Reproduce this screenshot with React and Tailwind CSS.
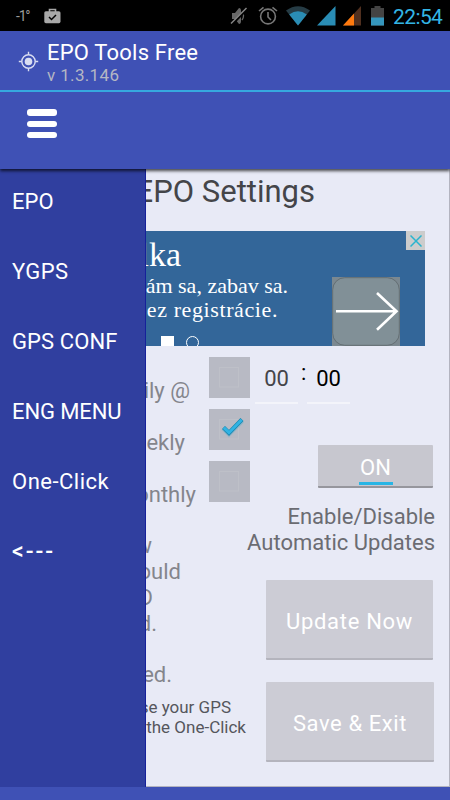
import clsx from "clsx";

const menuItems = [
  { label: "EPO", style: "text-[22px] tracking-[0.1px]" },
  { label: "YGPS", style: "text-[22px] tracking-[0.4px]" },
  { label: "GPS CONF", style: "text-[22px] tracking-[0.1px]" },
  { label: "ENG MENU", style: "text-[22px] tracking-[-0.1px]" },
  { label: "One-Click", style: "text-[22px] tracking-[0.5px]" },
  { label: "<---", style: "text-[23px] font-medium tracking-[2px]" },
];

const schedules = [
  { label: "ily @", width: "w-[44px]", checked: false },
  { label: "ekly", width: "w-[39px]", checked: true },
  { label: "onthly", width: "w-[50px]", checked: false },
];

const StatusBar = () => (
  <div className="flex h-[31px] items-center bg-black pr-[7px] pl-[16px]">
    <span className="w-[28px] text-[14px] leading-none tracking-[-1.2px] text-[#9a9a9a]">-1°</span>
    {/* Store bag */}
    <svg className="h-[16px] w-[17px]" viewBox="0 0 17 16">
      <path d="M5.5 4V1.5h6V4" fill="none" stroke="#a8a8a8" strokeWidth="1.6" />
      <rect x="0.3" y="3.2" width="16.2" height="12" rx="1.6" fill="#a8a8a8" />
      <path d="M5 9l2.5 2.5 4.5-4.5" fill="none" stroke="#000" strokeWidth="1.5" />
    </svg>
    <div className="ml-auto flex items-center">
      {/* Muted speaker */}
      <svg className="h-[20px] w-[18px]" viewBox="0 0 18 20">
        <path d="M2 7h3l4-5q2 0 2 3v10q0 3-2 3l-4-5H2z" fill="#666" />
        <path d="M12 6q3 4 0 8" fill="none" stroke="#666" strokeWidth="1.3" />
        <path d="M1.500 18.500L17 3" stroke="#000" strokeWidth="3" />
        <path d="M1 17.500L16.500 2" stroke="#888" strokeWidth="1.4" />
      </svg>
      {/* Alarm */}
      <svg className="ml-[10px] h-[20px] w-[20px]" viewBox="0 0 20 20" fill="none" stroke="#777" strokeWidth="1.6">
        <circle cx="10" cy="10.5" r="7.4" />
        <path d="M10 6v5l3 3" />
        <path d="M1 5l4.500-3.700M19 5l-4.500-3.700" />
      </svg>
      {/* Wifi */}
      <svg className="ml-[8px] h-[20px] w-[24px]" viewBox="0 0 24 20">
        <path d="M0 4.500Q12-4 24 4.500L12 19.500z" fill="#263c45" />
        <path d="M3.200 8.500Q12 2 20.800 8.500L12 19.500z" fill="#2a8db5" />
      </svg>
      {/* Signal, both SIMs */}
      <svg className="ml-[7px] h-[20px] w-[19px]" viewBox="0 0 19 20">
        <path d="M0 19.500L18.500 0V19.500z" fill="#2a8db5" />
      </svg>
      <svg className="ml-[7px] h-[20px] w-[18px]" viewBox="0 0 18 20">
        <path d="M0 19.500L18 0V19.500z" fill="#51301f" />
        <path d="M0 19.500L11 7.500V19.500z" fill="#ff7a0e" />
      </svg>
      {/* Battery */}
      <svg className="ml-[10px] h-[20px] w-[13px]" viewBox="0 0 13 20">
        <path d="M0 2h3.500V0h6v2H13v17.500H0z" fill="#444" />
        <path d="M0 11.500h13v8H0z" fill="#3596bd" />
      </svg>
      <span className="ml-[9px] w-[50px] pt-[3px] text-[21px] leading-[28px] tracking-[-0.6px] whitespace-nowrap text-[#33b5e5]">
        22:54
      </span>
    </div>
  </div>
);

const Header = () => (
  <header className="z-10 bg-[#3f51b5] shadow-[0_2px_3px_rgba(0,0,0,0.7)]">
    <div className="flex h-[61px] items-start border-b-2 border-[#36a9df] pl-[18px]">
      <svg className="mt-[20px] h-[21px] w-[21px]" viewBox="0 0 21 21" fill="none" stroke="#d9ddf2" strokeWidth="1.4">
        <circle cx="10.500" cy="10.500" r="6.700" />
        <path d="M10.500 0.800v3M10.500 17.200v3M0.800 10.500h3M17.200 10.500h3" />
        <circle cx="10.500" cy="10.500" r="3.800" fill="#d9ddf2" stroke="none" />
      </svg>
      <div className="pt-[9px] pl-[8px]">
        <h1 className="text-[22px] leading-[26px] tracking-[0.2px] text-white">EPO Tools Free</h1>
        <p className="-mt-[1px] text-[17px] leading-[20px] tracking-[0.35px] text-[#b5b7c4]">v 1.3.146</p>
      </div>
    </div>
    <div className="flex h-[77px] flex-col gap-[5px] pt-[17px] pl-[27px]">
      <span className="h-[7px] w-[30px] rounded-[3px] bg-white" />
      <span className="h-[6px] w-[30px] rounded-[3px] bg-white" />
      <span className="h-[6px] w-[30px] rounded-[3px] bg-white" />
    </div>
  </header>
);

const SideMenu = () => (
  <nav className="flex w-[146px] shrink-0 flex-col gap-[30px] border-r border-[#16219a] bg-[#303f9f] pt-[13px] pl-[12px]">
    {menuItems.map((item) => (
      <a key={item.label} className={clsx("h-[40px] leading-[40px] whitespace-nowrap text-white", item.style)}>
        {item.label}
      </a>
    ))}
  </nav>
);

const Banner = () => (
  <div className="flex h-[115px] w-[279px] items-start overflow-hidden bg-[#336699] font-['Liberation_Serif',serif] text-white">
    <div className="w-[186px]">
      <div className="flex h-[42px] w-[35px] justify-end">
        <span className="text-[34px] leading-[48px] whitespace-nowrap">lka</span>
      </div>
      <div className="flex h-[24px] w-[142px] justify-end">
        <span className="text-[22px] leading-[25px] whitespace-nowrap">ám sa, zabav sa.</span>
      </div>
      <div className="flex h-[24px] w-[132px] justify-end">
        <span className="text-[22px] leading-[25px] tracking-[0.6px] whitespace-nowrap">ez registrácie.</span>
      </div>
      <div className="flex gap-[12px] pt-[15px] pl-[15px]">
        <span className="h-[13px] w-[13px] bg-white" />
        <span className="h-[13px] w-[13px] rounded-full border border-white" />
      </div>
    </div>
    <div className="mt-[46px] h-[69px] w-[68px] bg-[#7b8890]">
      <svg className="h-[69px] w-[68px]" viewBox="0 0 68 69" fill="none">
        <rect x="0.700" y="0.700" width="66.600" height="67.600" rx="12" fill="#819097" stroke="#646e73" />
        <path d="M4 34.300h60M45 16l19.500 18.300L45 52.700" stroke="#fff" strokeWidth="2.600" />
      </svg>
    </div>
    <div className="ml-auto flex h-[19px] w-[19px] items-center justify-center bg-[#cccccc]">
      <svg className="h-[12px] w-[12px]" viewBox="0 0 12 12" stroke="#29b4cf" strokeWidth="1.500">
        <path d="M0.500 0.500l11 11M11.500 0.500l-11 11" />
      </svg>
    </div>
  </div>
);

const CheckBox = ({ checked }) => (
  <div className="h-[41px] w-[41px] bg-[#b8bac4]">
    <svg className="h-[41px] w-[41px]" viewBox="0 0 41 41" fill="none">
      <rect x="10.500" y="10.500" width="19" height="19.500" stroke="#bec0c8" />
      {checked && (
        <>
          <path d="M14.500 19l5.500 5.500L33 11.500" stroke="#72b3cd" strokeWidth="5.500" opacity="0.5" />
          <path d="M14.500 18.500l5.500 5.500L33 10.500" stroke="#1a84ad" strokeWidth="4.200" />
          <path d="M14.800 18.700l5.200 5L32.700 10.800" stroke="#31b3e3" strokeWidth="3" />
        </>
      )}
    </svg>
  </div>
);

// Text whose start runs under the side menu
const Clipped = ({ width, className, children }) => (
  <div className={clsx("flex justify-end whitespace-nowrap", width, className)}>
    <span>{children}</span>
  </div>
);

const Schedule = () => (
  <div className="w-[104px] shrink-0 text-[22px] text-[#84858c]">
    <div className="flex flex-col gap-[11px] pt-[11px]">
      {schedules.map((s) => (
        <div key={s.label} className="flex h-[41px] justify-between">
          <Clipped width={s.width} className="pt-[21px] leading-[26px]">
            {s.label}
          </Clipped>
          <CheckBox checked={s.checked} />
        </div>
      ))}
    </div>
    <div className="pt-[31px] leading-[26px]">
      <Clipped width="w-[6px]">w</Clipped>
      <Clipped width="w-[35px]">ould</Clipped>
      <Clipped width="w-[7px]">D</Clipped>
      <Clipped width="w-[11px]">d.</Clipped>
      <Clipped width="w-[26px]" className="pt-[25px]">
        ed.
      </Clipped>
    </div>
    <div className="pt-[9px] text-[17px] leading-[20px] text-[#55565c]">
      <Clipped width="w-[85px]">se your GPS</Clipped>
      <Clipped width="w-[100px]">the One-Click</Clipped>
    </div>
  </div>
);

const Controls = () => (
  <div className="flex w-[199px] flex-col items-end pr-[14px]">
    <div className="flex h-[99px] w-[185px] items-start gap-[3px] pt-[20px] pl-[5px] text-[22px] leading-[26px]">
      <div className="flex h-[38px] w-[43px] justify-center border-b-2 border-[#f3f4fa] text-[#444449]">00</div>
      <span className="-mt-[6px] w-[3px] text-black">:</span>
      <div className="flex h-[38px] w-[43px] justify-center border-b-2 border-[#f3f4fa] text-black">00</div>
    </div>
    <button className="mr-[2px] flex h-[43px] w-[115px] flex-col items-center rounded-[1px] border-b-2 border-[#96969d] bg-[#c7c7cf] pt-[10px] text-[22px] leading-[26px] text-white">
      ON
      <span className="mt-[1px] h-[3px] w-[34px] shrink-0 bg-[#28b5e5]" />
    </button>
    <p className="mt-[16px] text-right text-[22px] leading-[26px] whitespace-nowrap text-[#6b6c72]">
      Enable/Disable
      <br />
      Automatic Updates
    </p>
    <button className="mt-[24px] mr-[2px] h-[80px] w-[167px] rounded-[1px] border-b-2 border-[#b4b4bd] bg-[#ccccd5] pt-[4px] text-[22px] tracking-[0.7px] text-white">
      Update Now
    </button>
    <button className="mt-[22px] mr-[1px] h-[80px] w-[168px] rounded-[1px] border-b-2 border-[#b4b4bd] bg-[#ccccd5] pt-[4px] text-[22px] tracking-[0.6px] text-white">
      Save &amp; Exit
    </button>
  </div>
);

export default function App() {
  return (
    <div className="flex h-[800px] w-[450px] flex-col overflow-hidden bg-[#3f51b5] font-[Roboto,sans-serif]">
      <StatusBar />
      <Header />
      <div className="flex h-[618px]">
        <SideMenu />
        <main className="flex w-[304px] flex-col overflow-hidden border-r border-b border-[#b3b4c0] bg-[#e8eaf6]">
          <Clipped width="w-[169px]" className="h-[62px] text-[31px] leading-[46px] text-[#444549]">
            EPO Settings
          </Clipped>
          <Banner />
          <div className="flex">
            <Schedule />
            <Controls />
          </div>
        </main>
      </div>
    </div>
  );
}
